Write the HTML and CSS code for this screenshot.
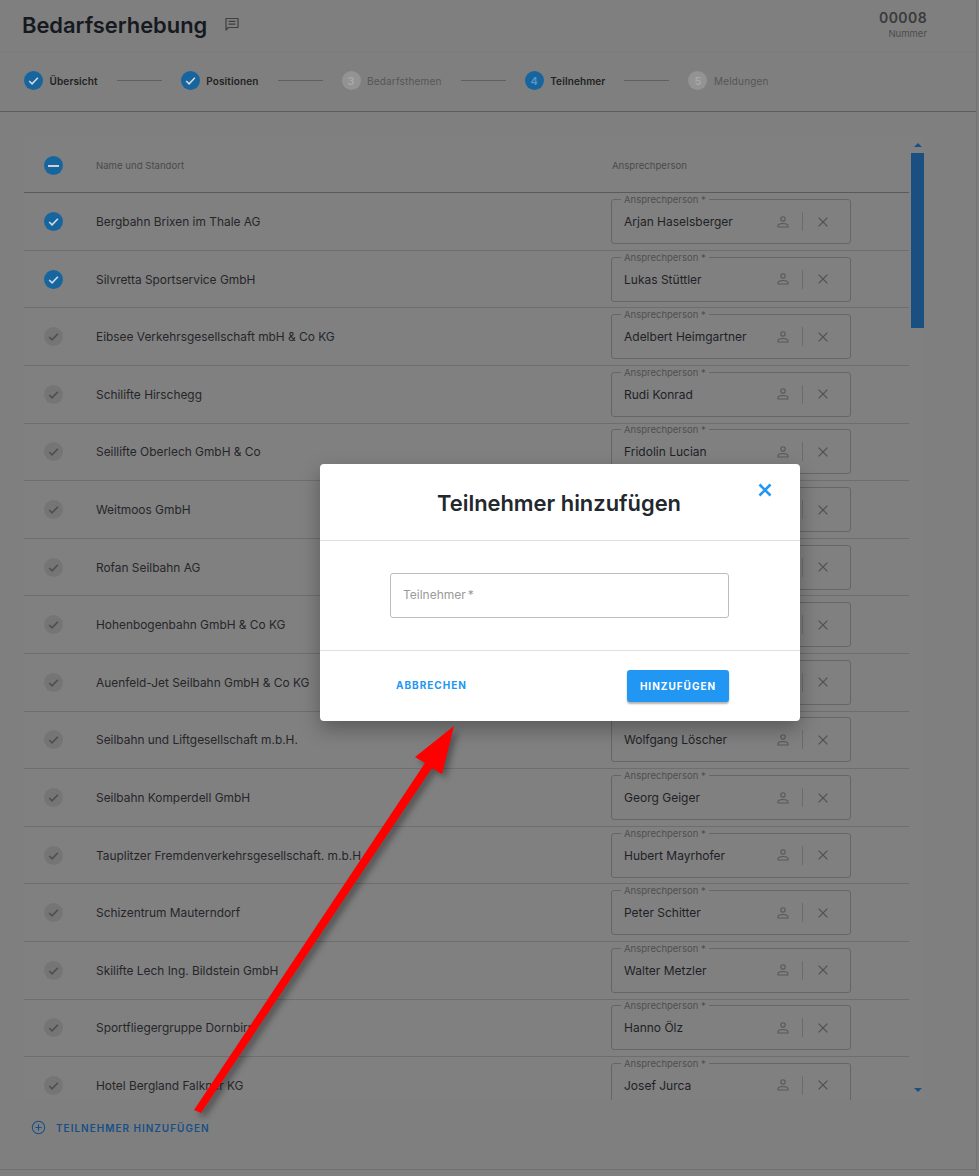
FILE: index.html
```html
<!DOCTYPE html>
<html lang="de">
<head>
<meta charset="utf-8">
<title>Bedarfserhebung</title>
<link rel="stylesheet" href="styles.css">
</head>
<body>
<svg class="defs" width="0" height="0" aria-hidden="true">
  <symbol id="check" viewBox="0 0 19 19"><path d="M5.2 10l2.9 2.8 5.8-6" fill="none" stroke="currentColor" stroke-width="1.6"/></symbol>
  <symbol id="person" viewBox="0 0 12 12"><circle cx="6" cy="2.9" r="2.2" fill="none" stroke="currentColor" stroke-width="1.1"/><path d="M1 11v-1.2c0-1.5 2.6-2.3 5-2.3s5 .8 5 2.3V11z" fill="none" stroke="currentColor" stroke-width="1.1" stroke-linejoin="round"/></symbol>
  <symbol id="cross" viewBox="0 0 10 10"><path d="M.6.6l8.8 8.8M9.4.6L.6 9.4" fill="none" stroke="currentColor" stroke-width="1.2"/></symbol>
</svg>
<div class="app">
  <header class="top">
    <div class="title-wrap">
      <h1 class="title">Bedarfserhebung</h1>
      <svg class="comment" viewBox="0 0 16 16"><path d="M2 2.5h12v9H4.4L2 14z" fill="none" stroke="currentColor" stroke-width="1.2" stroke-linejoin="round"/><path d="M4.6 5.3h6.8M4.6 8.2h6.8" stroke="currentColor" stroke-width="1.2"/></svg>
    </div>
    <div class="number"><strong>00008</strong><span>Nummer</span></div>
  </header>
  <nav class="steps">
    <div class="step"><span class="dot on"><svg class="dot-check"><use href="#check"/></svg></span><span class="step-label">Übersicht</span></div>
    <i class="step-line"></i>
    <div class="step"><span class="dot on"><svg class="dot-check"><use href="#check"/></svg></span><span class="step-label">Positionen</span></div>
    <i class="step-line"></i>
    <div class="step"><span class="dot">3</span><span class="step-label muted">Bedarfsthemen</span></div>
    <i class="step-line"></i>
    <div class="step"><span class="dot on">4</span><span class="step-label">Teilnehmer</span></div>
    <i class="step-line"></i>
    <div class="step"><span class="dot">5</span><span class="step-label muted">Meldungen</span></div>
  </nav>
  <section class="panel">
    <div class="table">
      <div class="head">
        <span class="tick on"><i class="minus"></i></span>
        <span class="col-name">Name und Standort</span>
        <span class="col-person">Ansprechperson</span>
      </div>
      <div class="row"><span class="tick on"><svg><use href="#check"/></svg></span><span class="name">Bergbahn Brixen im Thale AG</span><div class="field"><span class="field-label">Ansprechperson *</span><span class="field-value">Arjan Haselsberger</span><svg class="ico-person"><use href="#person"/></svg><i class="sep"></i><svg class="ico-cross"><use href="#cross"/></svg></div></div>
      <div class="row"><span class="tick on"><svg><use href="#check"/></svg></span><span class="name">Silvretta Sportservice GmbH</span><div class="field"><span class="field-label">Ansprechperson *</span><span class="field-value">Lukas Stüttler</span><svg class="ico-person"><use href="#person"/></svg><i class="sep"></i><svg class="ico-cross"><use href="#cross"/></svg></div></div>
      <div class="row"><span class="tick"><svg><use href="#check"/></svg></span><span class="name">Eibsee Verkehrsgesellschaft mbH &amp; Co KG</span><div class="field"><span class="field-label">Ansprechperson *</span><span class="field-value">Adelbert Heimgartner</span><svg class="ico-person"><use href="#person"/></svg><i class="sep"></i><svg class="ico-cross"><use href="#cross"/></svg></div></div>
      <div class="row"><span class="tick"><svg><use href="#check"/></svg></span><span class="name">Schilifte Hirschegg</span><div class="field"><span class="field-label">Ansprechperson *</span><span class="field-value">Rudi Konrad</span><svg class="ico-person"><use href="#person"/></svg><i class="sep"></i><svg class="ico-cross"><use href="#cross"/></svg></div></div>
      <div class="row"><span class="tick"><svg><use href="#check"/></svg></span><span class="name">Seillifte Oberlech GmbH &amp; Co</span><div class="field"><span class="field-label">Ansprechperson *</span><span class="field-value">Fridolin Lucian</span><svg class="ico-person"><use href="#person"/></svg><i class="sep"></i><svg class="ico-cross"><use href="#cross"/></svg></div></div>
      <div class="row"><span class="tick"><svg><use href="#check"/></svg></span><span class="name">Weitmoos GmbH</span><div class="field"><span class="field-value"></span><svg class="ico-person"><use href="#person"/></svg><i class="sep"></i><svg class="ico-cross"><use href="#cross"/></svg></div></div>
      <div class="row"><span class="tick"><svg><use href="#check"/></svg></span><span class="name">Rofan Seilbahn AG</span><div class="field"><span class="field-value"></span><svg class="ico-person"><use href="#person"/></svg><i class="sep"></i><svg class="ico-cross"><use href="#cross"/></svg></div></div>
      <div class="row"><span class="tick"><svg><use href="#check"/></svg></span><span class="name">Hohenbogenbahn GmbH &amp; Co KG</span><div class="field"><span class="field-value"></span><svg class="ico-person"><use href="#person"/></svg><i class="sep"></i><svg class="ico-cross"><use href="#cross"/></svg></div></div>
      <div class="row"><span class="tick"><svg><use href="#check"/></svg></span><span class="name">Auenfeld-Jet Seilbahn GmbH &amp; Co KG</span><div class="field"><span class="field-value"></span><svg class="ico-person"><use href="#person"/></svg><i class="sep"></i><svg class="ico-cross"><use href="#cross"/></svg></div></div>
      <div class="row"><span class="tick"><svg><use href="#check"/></svg></span><span class="name">Seilbahn und Liftgesellschaft m.b.H.</span><div class="field"><span class="field-value">Wolfgang Löscher</span><svg class="ico-person"><use href="#person"/></svg><i class="sep"></i><svg class="ico-cross"><use href="#cross"/></svg></div></div>
      <div class="row"><span class="tick"><svg><use href="#check"/></svg></span><span class="name">Seilbahn Komperdell GmbH</span><div class="field"><span class="field-label">Ansprechperson *</span><span class="field-value">Georg Geiger</span><svg class="ico-person"><use href="#person"/></svg><i class="sep"></i><svg class="ico-cross"><use href="#cross"/></svg></div></div>
      <div class="row"><span class="tick"><svg><use href="#check"/></svg></span><span class="name">Tauplitzer Fremdenverkehrsgesellschaft. m.b.H.</span><div class="field"><span class="field-label">Ansprechperson *</span><span class="field-value">Hubert Mayrhofer</span><svg class="ico-person"><use href="#person"/></svg><i class="sep"></i><svg class="ico-cross"><use href="#cross"/></svg></div></div>
      <div class="row"><span class="tick"><svg><use href="#check"/></svg></span><span class="name">Schizentrum Mauterndorf</span><div class="field"><span class="field-label">Ansprechperson *</span><span class="field-value">Peter Schitter</span><svg class="ico-person"><use href="#person"/></svg><i class="sep"></i><svg class="ico-cross"><use href="#cross"/></svg></div></div>
      <div class="row"><span class="tick"><svg><use href="#check"/></svg></span><span class="name">Skilifte Lech Ing. Bildstein GmbH</span><div class="field"><span class="field-label">Ansprechperson *</span><span class="field-value">Walter Metzler</span><svg class="ico-person"><use href="#person"/></svg><i class="sep"></i><svg class="ico-cross"><use href="#cross"/></svg></div></div>
      <div class="row"><span class="tick"><svg><use href="#check"/></svg></span><span class="name">Sportfliegergruppe Dornbirn</span><div class="field"><span class="field-label">Ansprechperson *</span><span class="field-value">Hanno Ölz</span><svg class="ico-person"><use href="#person"/></svg><i class="sep"></i><svg class="ico-cross"><use href="#cross"/></svg></div></div>
      <div class="row"><span class="tick"><svg><use href="#check"/></svg></span><span class="name">Hotel Bergland Falkner KG</span><div class="field"><span class="field-label">Ansprechperson *</span><span class="field-value">Josef Jurca</span><svg class="ico-person"><use href="#person"/></svg><i class="sep"></i><svg class="ico-cross"><use href="#cross"/></svg></div></div>
    </div>
    <div class="scrollbar">
      <i class="arrow-up"></i>
      <i class="thumb"></i>
      <i class="arrow-down"></i>
    </div>
  </section>
  <div class="add">
    <svg class="add-icon" viewBox="0 0 16 16"><circle cx="8" cy="8" r="6.6" fill="none" stroke="currentColor" stroke-width="1.1"/><path d="M8 4.6v6.8M4.6 8h6.8" stroke="currentColor" stroke-width="1.2"/></svg>
    <span>TEILNEHMER HINZUFÜGEN</span>
  </div>
</div>

<div class="modal" role="dialog">
  <div class="modal-head">
    <h2 class="modal-title">Teilnehmer hinzufügen</h2>
    <svg class="modal-close" viewBox="0 0 14 14"><path d="M1.5 1.5l11 11M12.5 1.5l-11 11" fill="none" stroke="currentColor" stroke-width="2.6"/></svg>
  </div>
  <div class="modal-body">
    <div class="input">Teilnehmer *</div>
  </div>
  <div class="modal-foot">
    <span class="btn-text">ABBRECHEN</span>
    <span class="btn-primary">HINZUFÜGEN</span>
  </div>
</div>

<svg class="pointer" viewBox="0 0 290 410"><polygon points="274,11 262,59 252,53 21,398 14,395 245,48 235,42"/></svg>
</body>
</html>
```
FILE: styles.css
```css
* { box-sizing: border-box; }
html, body { margin: 0; padding: 0; }
body {
  width: 979px;
  height: 1176px;
  overflow: hidden;
  position: relative;
  background: #7e7e7e;
  font-family: Inter, "Liberation Sans", sans-serif;
  color: #26262a;
}
.defs { position: absolute; }
.app {
  width: 977px;
  height: 1170px;
  border-right: 1px solid #727272;
  border-bottom: 1px solid #6e6e6e;
  background: #7f7f7f;
}
.top {
  height: 52px;
  padding: 9px 49px 0 22px;
  display: flex;
  justify-content: space-between;
  align-items: flex-start;
  border-bottom: 1px solid #7c7c7c;
}
.title-wrap { display: flex; align-items: flex-start; gap: 17px; }
.title { margin: 0; font-size: 21.9px; line-height: 32px; font-weight: 600; color: #16191f; }
.comment { width: 16px; height: 16px; margin-top: 7px; color: #3f3f3f; }
.number { display: flex; flex-direction: column; align-items: flex-end; }
.number strong { font-size: 14px; line-height: 17px; font-weight: 600; color: #3a3a3a; letter-spacing: .4px; }
.number span { font-size: 9.5px; line-height: 16px; color: #4c4c4c; }
.steps {
  height: 60px;
  padding: 19px 0 20px 24px;
  display: flex;
  align-items: flex-start;
  border-bottom: 1px solid #5d5d5d;
}
.step { display: flex; align-items: center; gap: 6.5px; height: 19px; }
.dot {
  width: 19px;
  height: 19px;
  border-radius: 50%;
  background: #939393;
  color: #a9a9a9;
  font-size: 11px;
  font-weight: 600;
  display: flex;
  align-items: center;
  justify-content: center;
}
.dot.on { background: #17659f; color: #5b97c8; }
.dot-check { width: 19px; height: 19px; color: #d8d8d8; }
.step-label { font-size: 10px; font-weight: 600; color: #222; letter-spacing: .13px; }
.step-label.muted { font-weight: 400; color: #565656; letter-spacing: .18px; }
.step-line { width: 45px; height: 1px; margin: 9px 19px 0; background: #606060; display: block; }
.panel {
  margin: 25px 0 0 24px;
  width: 901px;
  height: 963px;
  display: flex;
  overflow: hidden;
  background: #808080;
}
.table { width: 885px; flex: none; }
.head {
  height: 56.2px;
  display: flex;
  align-items: center;
  padding: 2px 0 0 20px;
  border-bottom: 1px solid #5a5a5a;
  position: relative;
}
.col-name { width: 516px; margin-left: 33px; font-size: 9.6px; color: #4a4a4a; }
.col-person { font-size: 9.6px; color: #4a4a4a; }
.tick {
  width: 19px;
  height: 19px;
  flex: none;
  border-radius: 50%;
  background: #757575;
  color: #4e4e4e;
  display: flex;
  align-items: center;
  justify-content: center;
}
.tick svg { width: 19px; height: 19px; }
.tick.on { background: #17659f; color: #d0dce6; }
.minus { width: 11px; height: 2px; background: #d0d0d0; display: block; }
.row {
  height: 57.6px;
  display: flex;
  align-items: center;
  padding: .2px 0 0 20px;
  border-bottom: 1px solid #6e6e6e;
}
.name { width: 515px; margin-left: 33px; font-size: 11.9px; color: #26262a; white-space: nowrap; }
.field {
  width: 240px;
  height: 45px;
  flex: none;
  border: 1px solid #666;
  border-radius: 3px;
  padding-left: 12px;
  display: flex;
  align-items: center;
  position: relative;
}
.field-label {
  position: absolute;
  left: 9px;
  top: -6px;
  padding: 0 3px;
  background: #808080;
  font-size: 9.5px;
  line-height: 11px;
  color: #4f4f4f;
}
.field-value { width: 144px; font-size: 12px; color: #1f1f27; white-space: nowrap; }
.ico-person { width: 12px; height: 12px; margin-right: 13px; margin-left: 9px; color: #585858; flex: none; }
.sep { width: 1px; height: 19px; background: #6b6b6b; display: block; flex: none; }
.ico-cross { width: 10px; height: 10px; margin-left: 15px; color: #505050; flex: none; }
.scrollbar {
  width: 16px;
  margin-left: 1px;
  display: flex;
  flex-direction: column;
  align-items: center;
  position: relative;
}
.thumb { width: 13px; height: 175px; margin-top: 6px; background: #1a4f82; display: block; }
.arrow-up {
  margin-top: 6px;
  width: 0;
  height: 0;
  border: 4px solid transparent;
  border-top: 0;
  border-bottom: 4px solid #1a4f82;
  display: block;
}
.arrow-down {
  margin-top: auto;
  margin-bottom: 8px;
  width: 0;
  height: 0;
  border: 4px solid transparent;
  border-bottom: 0;
  border-top: 4px solid #1a4f82;
  display: block;
}
.add {
  margin: 20px 0 0 31px;
  display: flex;
  align-items: center;
  gap: 10px;
  color: #174f87;
  font-size: 10px;
  font-weight: 600;
  letter-spacing: 1px;
}
.add-icon { width: 15px; height: 15px; }

.modal {
  position: absolute;
  left: 320px;
  top: 464px;
  width: 480px;
  height: 257px;
  background: #fff;
  border-radius: 4px;
  box-shadow: 0 8px 20px rgba(0, 0, 0, .3);
  display: flex;
  flex-direction: column;
}
.modal-head {
  height: 77px;
  flex: none;
  border-bottom: 1px solid #e0e0e0;
  display: flex;
  align-items: center;
  justify-content: center;
  position: relative;
}
.modal-title { margin: 2px 2px 0 0; font-size: 21.9px; line-height: 30px; font-weight: 600; color: #23272e; }
.modal-close { position: absolute; right: 28px; top: 19px; width: 14px; height: 14px; color: #2196f3; }
.modal-body {
  height: 110px;
  flex: none;
  border-bottom: 1px solid #e0e0e0;
  padding: 32px 71px 0 70px;
}
.input {
  height: 45px;
  border: 1px solid #bdbdbd;
  border-radius: 3px;
  padding: 13px 12px 0;
  font-size: 12px;
  line-height: 16px;
  word-spacing: -1.5px;
  color: #9a9a9a;
}
.modal-foot {
  flex: 1;
  display: flex;
  align-items: flex-start;
  justify-content: space-between;
  padding: 19px 71px 0 76px;
}
.btn-text { margin-top: 9px; font-size: 10px; line-height: 12px; font-weight: 700; letter-spacing: 1px; color: #2196f3; }
.btn-primary {
  width: 102px;
  height: 32px;
  padding-bottom: 1px;
  border-radius: 3px;
  background: #2196f3;
  color: #fff;
  font-size: 10px;
  font-weight: 700;
  letter-spacing: 1px;
  display: flex;
  align-items: center;
  justify-content: center;
  box-shadow: 0 2px 2px rgba(0, 0, 0, .3);
}
.pointer {
  position: absolute;
  left: 180px;
  top: 715px;
  width: 290px;
  height: 410px;
  fill: #ff0000;
  filter: drop-shadow(4px 4px 3px rgba(0, 0, 0, .35));
}
```
